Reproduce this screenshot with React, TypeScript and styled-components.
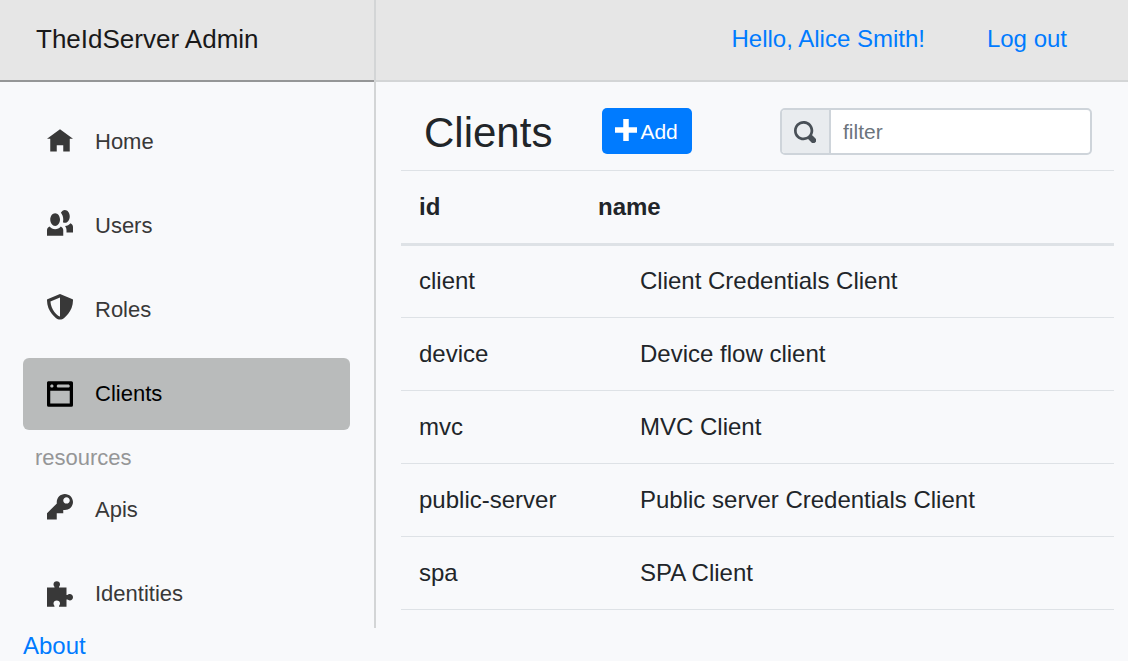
import React, { useState } from "react";
import styled, { createGlobalStyle, css } from "styled-components";

const GlobalStyle = createGlobalStyle`
  *, *::before, *::after { box-sizing: border-box; }
  body {
    margin: 0;
    background: #f8f9fb;
    color: #212529;
    font-family: "Liberation Sans", Arial, sans-serif;
    font-size: 24px;
    line-height: 36px;
  }
  a { color: #007bff; text-decoration: none; }
`;

const Shell = styled.div`
  display: flex;
  flex-direction: column;
  height: 100vh;
`;

const Columns = styled.div`
  display: flex;
  flex: 1;
  min-height: 0;
`;

const Sidebar = styled.aside`
  flex: none;
  width: 376px;
  border-right: 2px solid #d3d5d6;
  overflow: hidden;
`;

const Bar = styled.header`
  display: flex;
  align-items: center;
  height: 82px;
  padding-bottom: 2px;
  background: #e6e6e6;
  border-bottom: 2px solid #d3d5d6;
`;

const BrandBar = styled(Bar)`
  padding-left: 36px;
  border-bottom-color: #959697;
`;

const AccountBar = styled(Bar)`
  justify-content: flex-end;
  gap: 62px;
  padding-right: 61px;
`;

const Brand = styled.a`
  && { color: #19191a; }
  font-size: 26px;
`;

const Nav = styled.nav`
  padding: 24px 24px 0 23px;
`;

const NavList = styled.ul`
  display: flex;
  flex-direction: column;
  gap: 12px;
  margin: 0;
  padding: 0;
  list-style: none;
`;

const NavLink = styled.a<{ $active?: boolean }>`
  display: flex;
  align-items: center;
  gap: 22px;
  height: 72px;
  padding: 0 24px;
  border-radius: 6px;
  font-size: 22px;
  && { color: #383838; }
  ${(p) => p.$active && css`
    background: #b9bbbb;
    && { color: #000; }
  `}
`;

const NavHeading = styled.h2`
  margin: 0;
  padding: 10px 12px 0;
  height: 44px;
  font-size: 22px;
  font-weight: 400;
  color: #959697;
`;

const NavIcon = styled.svg`
  flex: none;
  width: 26px;
  height: 32px;
  fill: currentColor;
`;

const SmallIcon = styled.svg`
  flex: none;
  width: 22px;
  height: 22px;
  fill: currentColor;
`;

const Main = styled.main`
  flex: 1;
  min-width: 0;
`;

const Content = styled.section`
  padding: 26px 14px 0 25px;
`;

const Toolbar = styled.div`
  display: flex;
  align-items: flex-start;
  height: 62px;
  padding: 0 22px 0 23px;
`;

const Title = styled.h1`
  margin: 0 50px 0 0;
  font-size: 42px;
  line-height: 50px;
  font-weight: 400;
`;

const AddButton = styled.button`
  display: flex;
  gap: 3px;
  height: 46px;
  padding: 11px 14px 0 13px;
  border: 0;
  border-radius: 5px;
  background: #007bff;
  color: #fff;
  font: 21px/26px "Liberation Sans", Arial, sans-serif;
`;

const FilterGroup = styled.div`
  display: flex;
  width: 312px;
  height: 47px;
  margin-left: auto;
  border: 2px solid #ced4da;
  border-radius: 5px;
  overflow: hidden;
  background: #fff;
`;

const FilterLabel = styled.label`
  display: flex;
  align-items: center;
  width: 49px;
  padding-left: 12px;
  border-right: 2px solid #ced4da;
  background: #e9ecef;
  color: #495057;
`;

const FilterInput = styled.input`
  flex: 1;
  min-width: 0;
  padding: 0 12px;
  border: 0;
  outline: 0;
  background: transparent;
  color: #495057;
  font: 21px "Liberation Sans", Arial, sans-serif;
  &::placeholder { color: #6c757d; opacity: 1; }
`;

const Table = styled.table`
  width: 100%;
  border-collapse: separate;
  border-spacing: 0;
  border-top: 1px solid #dee2e6;
`;

const HeadCell = styled.th`
  height: 75px;
  padding: 0 18px;
  border-bottom: 3px solid #dee2e6;
  text-align: left;
  &:first-child { width: 179px; }
`;

const Cell = styled.td`
  height: 73px;
  padding: 0 18px;
  border-bottom: 1px solid #dee2e6;
  tr:first-child > & { height: 72px; padding-bottom: 2px; }
  &:last-child { padding-left: 60px; }
`;

const Footer = styled.footer`
  height: 33px;
  padding-left: 23px;
`;

const icons = {
  home: "M4 0l-4 3h1v4h2v-2h2v2h2v-4.03l1 .03-4-3z",
  people:
    "M5.5 0c-.51 0-.95.35-1.22.88.45.54.72 1.275.72 2.125 0 .29-.03.55-.09.81.19.11.38.19.59.19.83 0 1.5-.9 1.5-2s-.67-2-1.5-2zm-3 1c-.828 0-1.5.895-1.5 2s.672 2 1.5 2 1.5-.895 1.5-2-.672-2-1.5-2zm4.75 3.16c-.43.51-1.02.82-1.69.84.27.38.44.84.44 1.34v.66h2v-1.66c0-.52-.31-.97-.75-1.19zm-6.5 1c-.44.22-.75.67-.75 1.19v1.66h5v-1.66c0-.52-.31-.97-.75-1.19-.45.53-1.06.84-1.75.84s-1.3-.32-1.75-.84z",
  shield:
    "M4 0l-.19.09-3.5 1.47-.31.13v.31c0 1.66.67 3.12 1.47 4.19.4.53.83.97 1.25 1.28.42.31.83.53 1.28.53.46 0 .86-.22 1.28-.53.42-.31.85-.75 1.25-1.28.8-1.07 1.47-2.53 1.47-4.19v-.31l-.31-.13-3.5-1.47-.19-.09zm0 1.09v5.91c-.04 0-.33-.07-.66-.31s-.71-.63-1.06-1.09c-.64-.85-1.14-2.03-1.22-3.28l2.94-1.22z",
  browser:
    "M.34 0a.5.5 0 0 0-.34.5v7a.5.5 0 0 0 .5.5h7a.5.5 0 0 0 .5-.5v-7a.5.5 0 0 0-.5-.5h-7a.5.5 0 0 0-.09 0 .5.5 0 0 0-.06 0zm1.16 1c.28 0 .5.22.5.5s-.22.5-.5.5-.5-.22-.5-.5.22-.5.5-.5zm2 0h3c.28 0 .5.22.5.5s-.22.5-.5.5h-3c-.28 0-.5-.22-.5-.5s.22-.5.5-.5zm-2.5 2h6v4h-6v-4z",
  key: "M5.5 0c-1.38 0-2.5 1.12-2.5 2.5 0 .16 0 .32.03.47l-3.03 3.03v2h3v-2h2v-1l.03-.03c.15.03.31.03.47.03 1.38 0 2.5-1.12 2.5-2.5s-1.12-2.5-2.5-2.5zm.5 1c.55 0 1 .45 1 1s-.45 1-1 1-1-.45-1-1 .45-1 1-1z",
  puzzle:
    "M3 0c-.28 0-.54.1-.72.28s-.28.44-.28.72c0 .28.18.48.28.72.03.06.03.16.03.28h-2.31v6h2.31c0-.12 0-.22-.03-.28-.1-.24-.28-.44-.28-.72 0-.28.1-.54.28-.72s.44-.28.72-.28.54.1.72.28.28.44.28.72c0 .28-.18.48-.28.72-.03.06-.03.16-.03.28h2.31v-2.31c.12 0 .22 0 .28.03.24.1.44.28.72.28.28 0 .54-.1.72-.28s.28-.44.28-.72-.1-.54-.28-.72-.44-.28-.72-.28c-.28 0-.48.18-.72.28-.06.03-.16.03-.28.03v-2.31h-2.31c0-.12 0-.22.03-.28.1-.24.28-.44.28-.72 0-.28-.1-.54-.28-.72s-.44-.28-.72-.28z",
  plus: "M3 0v3h-3v2h3v3h2v-3h3v-2h-3v-3h-2z",
  search:
    "M3.5 0c-1.93 0-3.5 1.57-3.5 3.5s1.57 3.5 3.5 3.5c.59 0 1.17-.14 1.66-.41a1 1 0 0 0 .13.13l1 1a1.02 1.02 0 1 0 1.44-1.44l-1-1a1 1 0 0 0-.16-.13c.27-.49.44-1.06.44-1.66 0-1.93-1.55-3.5-3.5-3.5zm0 1c1.39 0 2.5 1.11 2.5 2.5 0 .66-.24 1.27-.66 1.72-.01.01-.02.02-.03.03a1 1 0 0 0-.13.13c-.44.4-1.04.63-1.69.63-1.39 0-2.5-1.11-2.5-2.5s1.11-2.5 2.5-2.5z",
};

type NavEntry = { label: string; icon: keyof typeof icons; low?: boolean; active?: boolean };

const mainNav: NavEntry[] = [
  { label: "Home", icon: "home", low: true },
  { label: "Users", icon: "people" },
  { label: "Roles", icon: "shield" },
  { label: "Clients", icon: "browser", low: true, active: true },
];

const resourceNav: NavEntry[] = [
  { label: "Apis", icon: "key" },
  { label: "Identities", icon: "puzzle", low: true },
];

const clients = [
  { id: "client", name: "Client Credentials Client" },
  { id: "device", name: "Device flow client" },
  { id: "mvc", name: "MVC Client" },
  { id: "public-server", name: "Public server Credentials Client" },
  { id: "spa", name: "SPA Client" },
];

function NavItems({ items }: { items: NavEntry[] }) {
  return (
    <NavList>
      {items.map((item) => (
        <li key={item.label}>
          <NavLink href="#" $active={item.active} aria-current={item.active ? "page" : undefined}>
            <NavIcon
              viewBox={item.low ? "0 -1 8 10" : "0 0 8 10"}
              preserveAspectRatio="none"
              aria-hidden="true"
            >
              <path d={icons[item.icon]} />
            </NavIcon>
            {item.label}
          </NavLink>
        </li>
      ))}
    </NavList>
  );
}

export default function App() {
  const [filter, setFilter] = useState("");
  const shown = clients.filter((c) => (c.id + " " + c.name).toLowerCase().includes(filter.toLowerCase()));

  return (
    <Shell>
      <GlobalStyle />
      <Columns>
        <Sidebar>
          <BrandBar>
            <Brand href="#">TheIdServer Admin</Brand>
          </BrandBar>
          <Nav>
            <NavItems items={mainNav} />
            <NavHeading>resources</NavHeading>
            <NavItems items={resourceNav} />
          </Nav>
        </Sidebar>
        <Main>
          <AccountBar>
            <a href="#">Hello, Alice Smith!</a>
            <a href="#">Log out</a>
          </AccountBar>
          <Content>
            <Toolbar>
              <Title>Clients</Title>
              <AddButton type="button">
                <SmallIcon viewBox="0 0 8 8" aria-hidden="true"><path d={icons.plus} /></SmallIcon>
                Add
              </AddButton>
              <FilterGroup>
                <FilterLabel htmlFor="filter" aria-label="filter">
                  <SmallIcon viewBox="0 0 8 8" aria-hidden="true"><path d={icons.search} /></SmallIcon>
                </FilterLabel>
                <FilterInput
                  id="filter"
                  placeholder="filter"
                  value={filter}
                  onChange={(e) => setFilter(e.target.value)}
                />
              </FilterGroup>
            </Toolbar>
            <Table>
              <thead>
                <tr>
                  <HeadCell scope="col">id</HeadCell>
                  <HeadCell scope="col">name</HeadCell>
                </tr>
              </thead>
              <tbody>
                {shown.map((c) => (
                  <tr key={c.id}>
                    <Cell>{c.id}</Cell>
                    <Cell>{c.name}</Cell>
                  </tr>
                ))}
              </tbody>
            </Table>
          </Content>
        </Main>
      </Columns>
      <Footer>
        <a href="#">About</a>
      </Footer>
    </Shell>
  );
}
